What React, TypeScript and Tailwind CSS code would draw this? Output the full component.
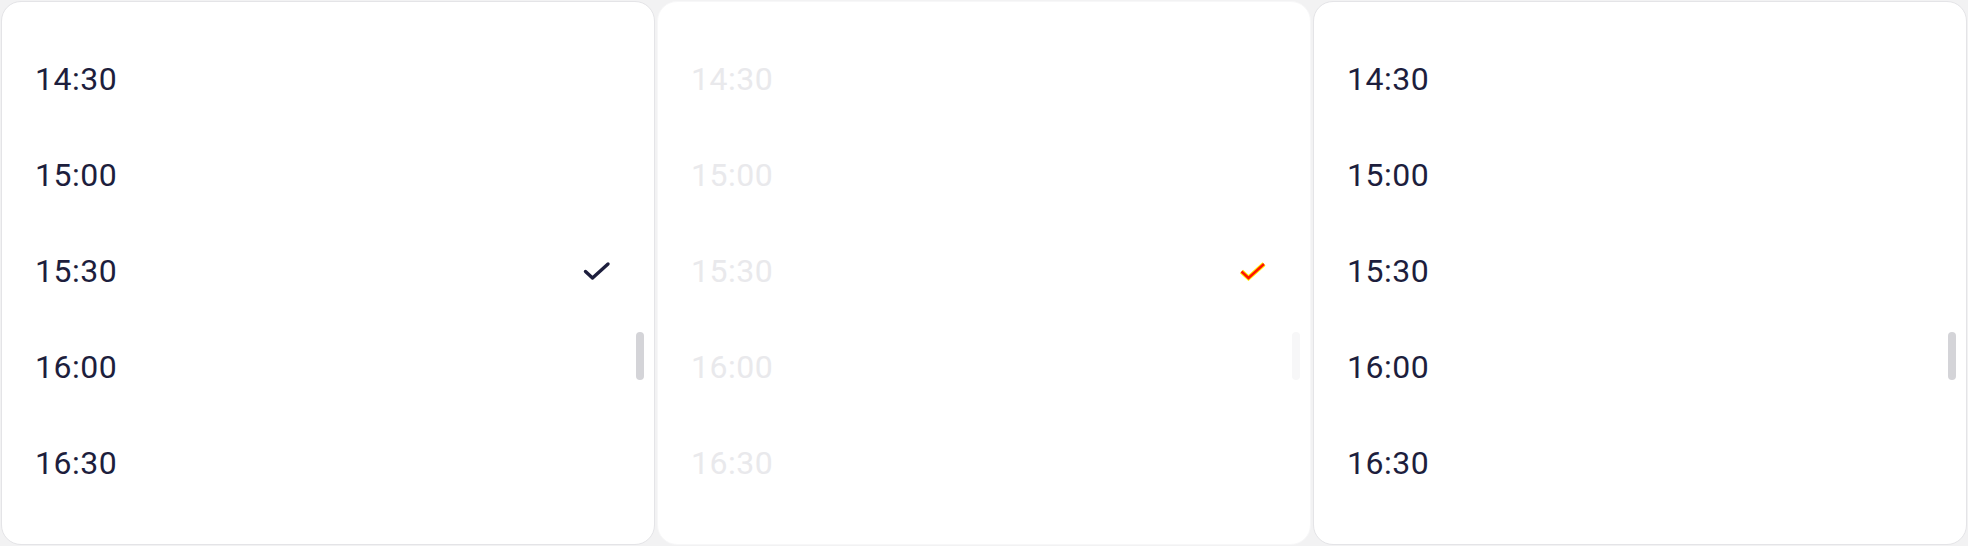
const times = ["14:30", "15:00", "15:30", "16:00", "16:30"]

function Check({ faded }: { faded?: boolean }) {
  return (
    <svg width="28" height="21" viewBox="0 0 28 21" fill="none" className="shrink-0">
      {faded ? (
        <>
          <polyline points="2.5,10.5 9.5,17 25,3" stroke="#ffee00" strokeWidth="4.6" strokeLinejoin="miter" />
          <polyline points="2.5,10.5 9.5,17 25,3" stroke="#ff1500" strokeWidth="2.6" strokeLinejoin="miter" />
        </>
      ) : (
        <polyline points="2.5,10.5 9.5,17 25,3" stroke="#1d1e3d" strokeWidth="3.4" strokeLinecap="round" strokeLinejoin="round" />
      )}
    </svg>
  )
}

function TimeList({ faded, selected }: { faded?: boolean; selected?: string }) {
  return (
    <div className="h-full p-px">
      <div
        className={
          faded
            ? "relative h-full rounded-[20px] border border-[#f7f7f8] bg-white"
            : "relative h-full rounded-[20px] border border-[#e4e4e7] bg-white"
        }
      >
        <div className="flex flex-col pt-[29px]">
          {times.map((time) => (
            <div key={time} className="flex h-24 items-center justify-between pl-[33px] pr-[43px]">
              <span
                className={
                  faded
                    ? "text-[32px] leading-none tracking-[0.5px] text-[#e9e9ec] font-['Roboto',sans-serif]"
                    : "text-[32px] leading-none tracking-[0.5px] text-[#1d1e3d] font-['Roboto',sans-serif]"
                }
              >
                {time}
              </span>
              {time === selected && <Check faded={faded} />}
            </div>
          ))}
        </div>
        <div
          className={
            faded
              ? "absolute right-[10px] top-[330px] h-12 w-2 rounded-full bg-[#f7f7f8]"
              : "absolute right-[10px] top-[330px] h-12 w-2 rounded-full bg-[#d4d4d8]"
          }
        />
      </div>
    </div>
  )
}

export default function App() {
  return (
    <div className="grid h-[546px] w-[1968px] grid-cols-3 bg-[#f2f2f3]">
      <TimeList selected="15:30" />
      <TimeList faded selected="15:30" />
      <TimeList />
    </div>
  )
}
